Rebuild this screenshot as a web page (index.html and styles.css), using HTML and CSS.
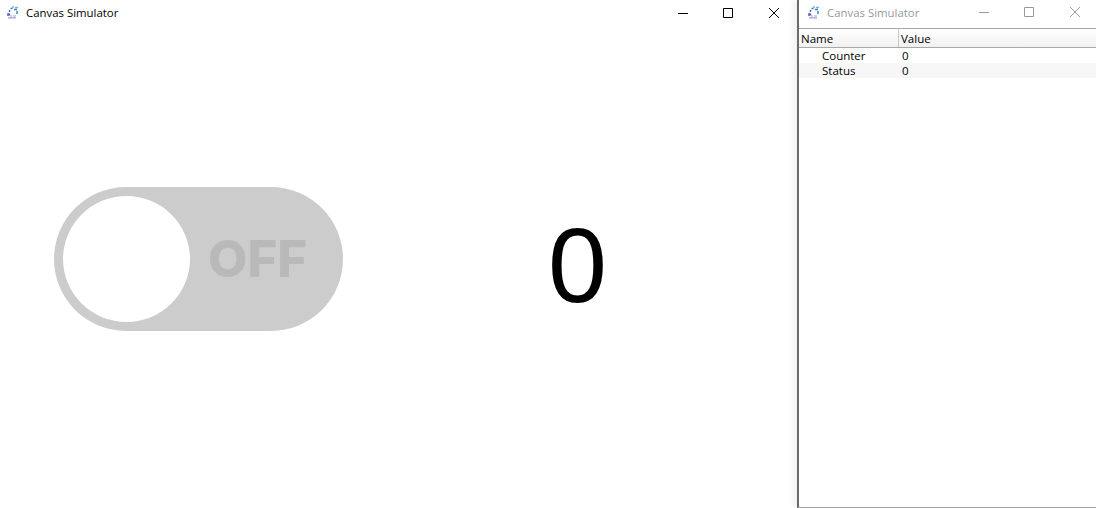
FILE: index.html
```html
<!DOCTYPE html>
<html lang="en">
<head>
  <meta charset="UTF-8">
  <title>Canvas Simulator</title>
  <link rel="stylesheet" href="styles.css">
</head>
<body>

<div class="window main-window">
  <div class="titlebar">
    <svg class="app-icon" width="12" height="13" viewBox="0 0 12 13">
      <path d="M5 1h2M8 1.5h3" stroke="#6fb6de" stroke-width="1.4" fill="none"/>
      <path d="M3.5 2.5h2M7 3.5h3M10 5v3" stroke="#2f7fb8" stroke-width="1.4" fill="none"/>
      <path d="M2.5 4v2M1 7v3M2.5 7.5v2" stroke="#4a5fb0" stroke-width="1.4" fill="none"/>
      <path d="M3 10h2M6 10h3M1 11.8h8" stroke="#a79ad8" stroke-width="1.2" fill="none"/>
    </svg>
    <span class="title">Canvas Simulator</span>
    <div class="controls">
      <svg width="10" height="10" viewBox="0 0 10 10"><path d="M0 5.5h10" stroke="#000"/></svg>
      <svg width="10" height="10" viewBox="0 0 10 10"><path d="M.5.5h9v9h-9z" stroke="#000" fill="none"/></svg>
      <svg width="10" height="10" viewBox="0 0 10 10"><path d="M0 0l10 10M10 0L0 10" stroke="#000" fill="none"/></svg>
    </div>
  </div>
  <div class="canvas">
    <div class="toggle">
      <div class="knob"></div>
      <span class="toggle-label">OFF</span>
    </div>
    <div class="counter">0</div>
  </div>
</div>

<div class="window side-window">
  <div class="titlebar">
    <svg class="app-icon" width="12" height="13" viewBox="0 0 12 13">
      <path d="M5 1h2M8 1.5h3" stroke="#6fb6de" stroke-width="1.4" fill="none"/>
      <path d="M3.5 2.5h2M7 3.5h3M10 5v3" stroke="#2f7fb8" stroke-width="1.4" fill="none"/>
      <path d="M2.5 4v2M1 7v3M2.5 7.5v2" stroke="#4a5fb0" stroke-width="1.4" fill="none"/>
      <path d="M3 10h2M6 10h3M1 11.8h8" stroke="#a79ad8" stroke-width="1.2" fill="none"/>
    </svg>
    <span class="title">Canvas Simulator</span>
    <div class="controls">
      <svg width="10" height="10" viewBox="0 0 10 10"><path d="M0 5.5h10" stroke="#999"/></svg>
      <svg width="10" height="10" viewBox="0 0 10 10"><path d="M.5.5h9v9h-9z" stroke="#999" fill="none"/></svg>
      <svg width="10" height="10" viewBox="0 0 10 10"><path d="M0 0l10 10M10 0L0 10" stroke="#999" fill="none"/></svg>
    </div>
  </div>
  <div class="table">
    <div class="row head">
      <div class="cell name">Name</div>
      <div class="cell value">Value</div>
    </div>
    <div class="row">
      <div class="cell name indent">Counter</div>
      <div class="cell value">0</div>
    </div>
    <div class="row alt">
      <div class="cell name indent">Status</div>
      <div class="cell value">0</div>
    </div>
  </div>
</div>

</body>
</html>
```

FILE: styles.css
```css
html, body {
  height: 100%;
}

body {
  margin: 0;
  display: flex;
  overflow: hidden;
  background: #fff;
  font-family: 'Open Sans', 'Noto Sans', sans-serif;
  font-size: 11.5px;
  color: #000;
}

.main-window {
  width: 797px;
  display: flex;
  flex-direction: column;
}

.side-window {
  flex: 1;
  border-left: 2px solid #6b6b6b;
  border-bottom: 1px solid #a0a0a0;
  box-shadow: -4px 0 6px rgba(0,0,0,0.06);
}

.titlebar {
  height: 25px;
  display: flex;
  align-items: center;
  padding-left: 7px;
  flex: none;
}

.title {
  margin-left: 7px;
  font-size: 11.4px;
}

.controls {
  margin-left: auto;
  display: flex;
  gap: 35px;
  padding-right: 18px;
}

.controls svg:last-child {
  margin-left: 1px;
}

.side-window .titlebar {
  height: 24px;
  padding-bottom: 4px;
  padding-left: 9px;
}

.side-window .title {
  color: #999;
}

.side-window .controls {
  padding-right: 16px;
}

.canvas {
  flex: 1;
  display: flex;
  align-items: center;
  padding: 0 0 15px 54px;
}

.toggle {
  width: 289px;
  height: 144px;
  border-radius: 72px;
  background: #cccccc;
  display: flex;
  align-items: center;
  padding-left: 9px;
  box-sizing: border-box;
  flex: none;
}

.knob {
  width: 127px;
  height: 126px;
  border-radius: 50%;
  background: #fff;
  flex: none;
}

.toggle-label {
  margin-left: 18px;
  margin-bottom: 2px;
  font-family: 'Inter', sans-serif;
  font-weight: 800;
  font-size: 51px;
  color: #b9b9b9;
}

.counter {
  margin-left: 205px;
  font-family: 'Liberation Sans', sans-serif;
  font-size: 106px;
  line-height: 1;
  margin-top: 11px;
}

.table {
  border-top: 1px solid #a8a8a8;
}

.row {
  display: flex;
  height: 15px;
  line-height: 15px;
}

.row.head {
  height: 18px;
  line-height: 20px;
  border-bottom: 1px solid #a8a8a8;
  background: linear-gradient(#fff, #f1f1f1);
}

.row.alt {
  background: #f7f7f7;
}

.cell {
  box-sizing: border-box;
}

.name {
  width: 100px;
  padding-left: 2px;
}

.head .name {
  border-right: 1px solid #c8c8c8;
}

.head .value {
  padding-left: 2px;
}

.indent {
  padding-left: 23px;
}

.value {
  padding-left: 3px;
}

.row .value {
  flex: 1;
}
```
